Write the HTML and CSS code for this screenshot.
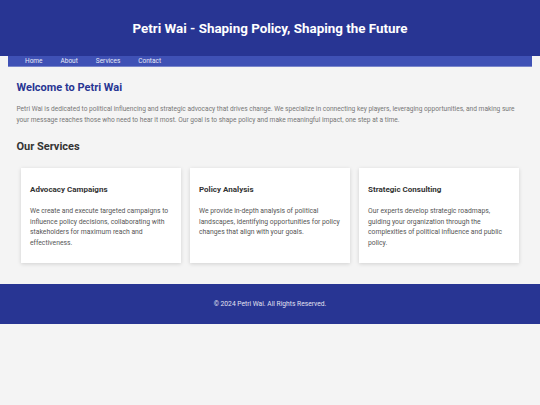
FILE: index.html
```html
<!DOCTYPE html>
<html lang="en">
<head>
<meta charset="utf-8">
<title>Petri Wai</title>
<link rel="stylesheet" href="styles.css">
</head>
<body>
<header class="site-header">
  <h1 class="site-title">Petri Wai - Shaping Policy, Shaping the Future</h1>
</header>
<nav class="site-nav">
  <a href="#" class="nav-link">Home</a>
  <a href="#" class="nav-link">About</a>
  <a href="#" class="nav-link">Services</a>
  <a href="#" class="nav-link">Contact</a>
</nav>
<main class="content">
  <section class="intro">
    <h2 class="intro-title">Welcome to Petri Wai</h2>
    <p class="intro-text">Petri Wai is dedicated to political influencing and strategic advocacy that drives change. We specialize in connecting key players, leveraging opportunities, and making sure your message reaches those who need to hear it most. Our goal is to shape policy and make meaningful impact, one step at a time.</p>
  </section>
  <section class="services">
    <h2 class="services-title">Our Services</h2>
    <div class="cards">
      <div class="card">
        <h3 class="card-title">Advocacy Campaigns</h3>
        <p class="card-text">We create and execute targeted campaigns to influence policy decisions, collaborating with stakeholders for maximum reach and effectiveness.</p>
      </div>
      <div class="card">
        <h3 class="card-title">Policy Analysis</h3>
        <p class="card-text">We provide in-depth analysis of political landscapes, identifying opportunities for policy changes that align with your goals.</p>
      </div>
      <div class="card">
        <h3 class="card-title">Strategic Consulting</h3>
        <p class="card-text">Our experts develop strategic roadmaps, guiding your organization through the complexities of political influence and public policy.</p>
      </div>
    </div>
  </section>
</main>
<footer class="site-footer">
  <p class="footer-text">&copy; 2024 Petri Wai. All Rights Reserved.</p>
</footer>
</body>
</html>
```

FILE: styles.css
```css
* { box-sizing: border-box; }
html, body {
  margin: 0;
  padding: 0;
  background: #f4f4f4;
  font-family: Roboto, "Liberation Sans", sans-serif;
  color: #333;
}
.site-header {
  background: #283593;
  height: 56px;
  display: flex;
  align-items: center;
  justify-content: center;
}
.site-title {
  margin: 0;
  color: #fff;
  font-size: 13.4px;
  font-weight: 700;
}
.site-nav {
  margin: 0 8px;
  background: #3f51b5;
  height: 11px;
  display: flex;
  align-items: center;
  padding: 0 8px;
  border-bottom: 1px solid #7986cb;
}
.nav-link {
  color: #e8eaf6;
  text-decoration: none;
  font-size: 6.5px;
  padding: 0 9px;
}
.content {
  padding: 0 16.5px;
}
.intro-title {
  margin: 14px 0 0;
  color: #283593;
  font-size: 11px;
  font-weight: 700;
}
.intro-text {
  margin: 10px 0 0;
  font-size: 6.6px;
  line-height: 11px;
  color: #777;
}
.services-title {
  margin: 14px 0 0;
  font-size: 11px;
  font-weight: 700;
  color: #333;
}
.cards {
  display: flex;
  margin-top: 15px;
}
.card {
  flex: 1;
  margin: 0 4.5px;
  background: #fff;
  height: 95px;
  padding: 17px 9px;
  box-shadow: 0 1px 4px rgba(0,0,0,0.15);
}
.card-title {
  margin: 0;
  font-size: 8px;
  font-weight: 700;
  color: #333;
}
.card-text {
  margin: 12px 0 0;
  font-size: 6.8px;
  line-height: 10.7px;
  color: #555;
}
.site-footer {
  margin-top: 21px;
  background: #283593;
  height: 40px;
  display: flex;
  align-items: center;
  justify-content: center;
}
.footer-text {
  margin: 0;
  color: #e0e0f0;
  font-size: 6.7px;
}
```
